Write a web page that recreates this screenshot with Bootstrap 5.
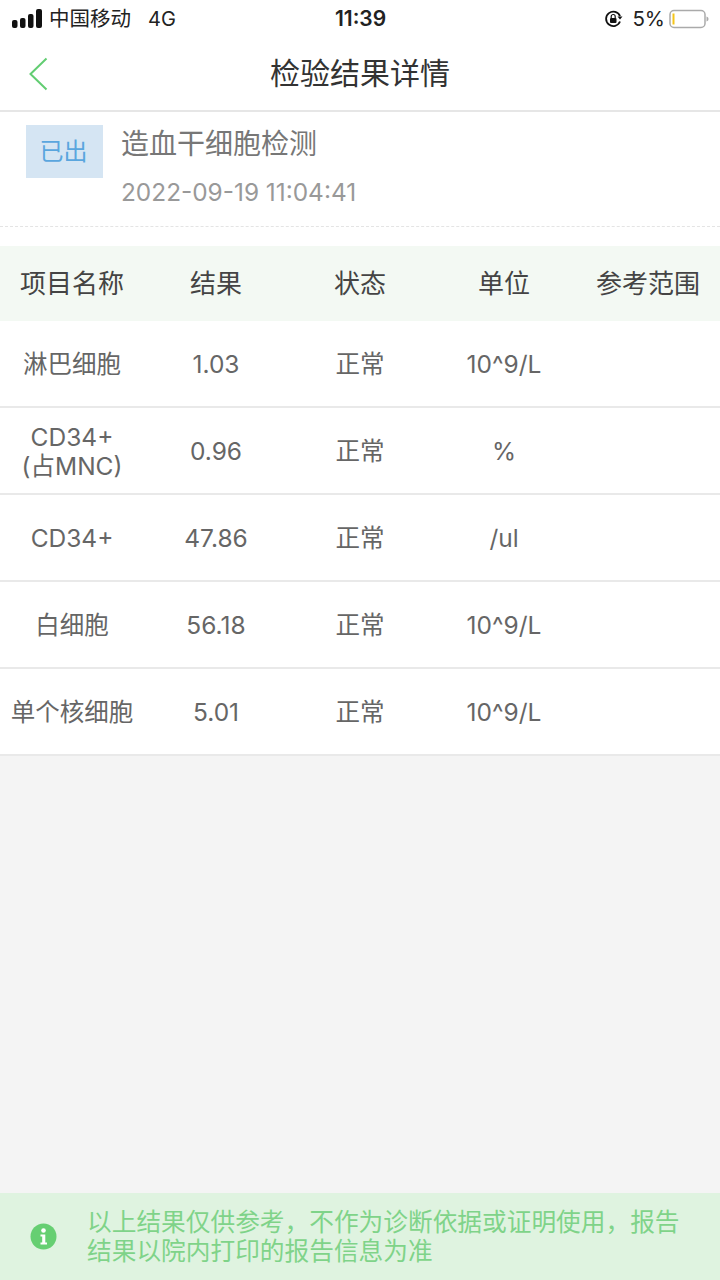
<!DOCTYPE html>
<html lang="zh-CN">
<head>
  <meta charset="UTF-8">
  <title>检验结果详情</title>
  <link rel="stylesheet" href="https://cdn.jsdelivr.net/npm/bootstrap@5.3.2/dist/css/bootstrap.min.css">
  <style>
    body {
      font-family: Inter, "Noto Sans CJK SC", sans-serif;
      background: #f4f4f4;
    }
    .app-page { width: 720px; height: 1280px; overflow: hidden; }
    .status-bar { height: 38px; padding: 0 11px 0 12px; font-size: 20.5px; color: #222; }
    .status-left, .status-right { width: 300px; }
    .carrier-name { margin-left: 6px; }
    .status-net { margin-left: 17px; font-size: 20px; }
    .status-time { font-weight: 600; font-size: 21px; }
    .title-bar { height: 74px; border-bottom: 2px solid #e6e6e6; padding-left: 29px; }
    .title-text { left: 0; right: 0; text-align: center; font-size: 30px; color: #333; line-height: 70px; top: 0; }
    .info-block { height: 115px; padding: 13px 0 0 26px; border-bottom: 1px dashed #e4e4e4; }
    .state-tag { width: 77px; height: 53px; background: #d5e5f3; color: #5aa6de; font-size: 24px; margin-right: 18px; padding-right: 2px; }
    .test-name { font-size: 28px; color: #777; line-height: 38px; margin-bottom: 13px; }
    .test-time { font-size: 24.400px; color: #999; line-height: 32px; }
    .gap-strip { height: 19px; }
    .result-row { display: grid; grid-template-columns: repeat(5, 144px); }
    .result-row > div { display: flex; align-items: center; justify-content: center; text-align: center; }
    .head-row { height: 75px; background: #f3f9f3; color: #444; font-size: 26px; }
    .body-row { height: 87px; border-bottom: 2px solid #e9e9e9; color: #666; font-size: 24.500px; line-height: 29px; }
    .body-row > div { padding-top: 2px; }
    .notice-bar { height: 87px; background: #dff3e0; color: #7fd389; font-size: 24.700px; line-height: 29px; padding: 0 30px; }
    .notice-bar svg { margin-right: 30px; flex: none; }
  </style>
</head>
<body>
<div class="app-page d-flex flex-column">
  <!-- status bar -->
  <div class="status-bar bg-white d-flex align-items-center justify-content-between">
    <div class="status-left d-flex align-items-center">
      <svg width="31" height="20" viewBox="0 0 31 20" fill="#111">
        <rect x="0" y="11" width="5.500" height="8" rx="2"/>
        <rect x="8" y="9" width="5.500" height="10" rx="2"/>
        <rect x="16" y="5" width="5.500" height="14" rx="2"/>
        <rect x="24" y="0" width="6" height="19" rx="2"/>
      </svg>
      <span class="carrier-name">中国移动</span>
      <span class="status-net">4G</span>
    </div>
    <div class="status-time">11:39</div>
    <div class="status-right d-flex align-items-center justify-content-end">
      <svg width="20" height="18" viewBox="0 0 20 18" fill="none">
        <path d="M16 6.200A7.200 7.200 0 1 0 16 11.500" stroke="#111" stroke-width="1.800"/>
        <path d="M13.500 6.500h5l-2.500 3z" fill="#111"/>
        <rect x="6" y="8" width="6.500" height="5" rx="1" fill="#111"/>
        <path d="M7.200 8V6.500a2 2 0 0 1 4 0V8" stroke="#111" stroke-width="1.200"/>
      </svg>
      <span class="ms-2 me-1">5%</span>
      <svg width="40" height="20" viewBox="0 0 40 20" fill="none">
        <rect x="1" y="1.500" width="35" height="17" rx="4" stroke="#aaa" stroke-width="1.500"/>
        <rect x="3.500" y="4.500" width="2" height="11" fill="#f5c518"/>
        <path d="M37.500 7.500c1.500.5 2 1.500 2 2.500s-.5 2-2 2.500z" fill="#aaa"/>
      </svg>
    </div>
  </div>

  <!-- title -->
  <div class="title-bar bg-white d-flex align-items-center position-relative">
    <svg width="20" height="34" viewBox="0 0 20 34" fill="none">
      <path d="M17.500 1.500 1.500 17l16 15.500" stroke="#62cd72" stroke-width="2"/>
    </svg>
    <div class="title-text position-absolute">检验结果详情</div>
  </div>

  <!-- test info -->
  <div class="info-block bg-white d-flex align-items-start">
    <div class="state-tag d-flex align-items-center justify-content-center">已出</div>
    <div>
      <div class="test-name">造血干细胞检测</div>
      <div class="test-time">2022-09-19 11:04:41</div>
    </div>
  </div>
  <div class="gap-strip bg-white"></div>

  <!-- results -->
  <div class="result-row head-row">
    <div>项目名称</div><div>结果</div><div>状态</div><div>单位</div><div>参考范围</div>
  </div>
  <div class="result-row body-row bg-white">
    <div>淋巴细胞</div><div>1.03</div><div>正常</div><div>10^9/L</div><div></div>
  </div>
  <div class="result-row body-row bg-white">
    <div>CD34+<br>(占MNC)</div><div>0.96</div><div>正常</div><div>%</div><div></div>
  </div>
  <div class="result-row body-row bg-white">
    <div>CD34+</div><div>47.86</div><div>正常</div><div>/ul</div><div></div>
  </div>
  <div class="result-row body-row bg-white">
    <div>白细胞</div><div>56.18</div><div>正常</div><div>10^9/L</div><div></div>
  </div>
  <div class="result-row body-row bg-white">
    <div>单个核细胞</div><div>5.01</div><div>正常</div><div>10^9/L</div><div></div>
  </div>

  <!-- notice -->
  <div class="notice-bar d-flex align-items-center mt-auto">
    <svg width="27" height="27" viewBox="0 0 27 27">
      <circle cx="13.500" cy="13.500" r="13" fill="#66cf72"/>
      <circle cx="13.500" cy="7.500" r="2.300" fill="#fff"/>
      <path d="M10.500 11.500h4.800v8h1.700v2h-6.500v-2h1.700v-6h-1.700z" fill="#fff"/>
    </svg>
    <div>以上结果仅供参考，不作为诊断依据或证明使用，报告<br>结果以院内打印的报告信息为准</div>
  </div>
</div>
<script src="https://cdn.jsdelivr.net/npm/bootstrap@5.3.2/dist/js/bootstrap.bundle.min.js"></script>
</body>
</html>
